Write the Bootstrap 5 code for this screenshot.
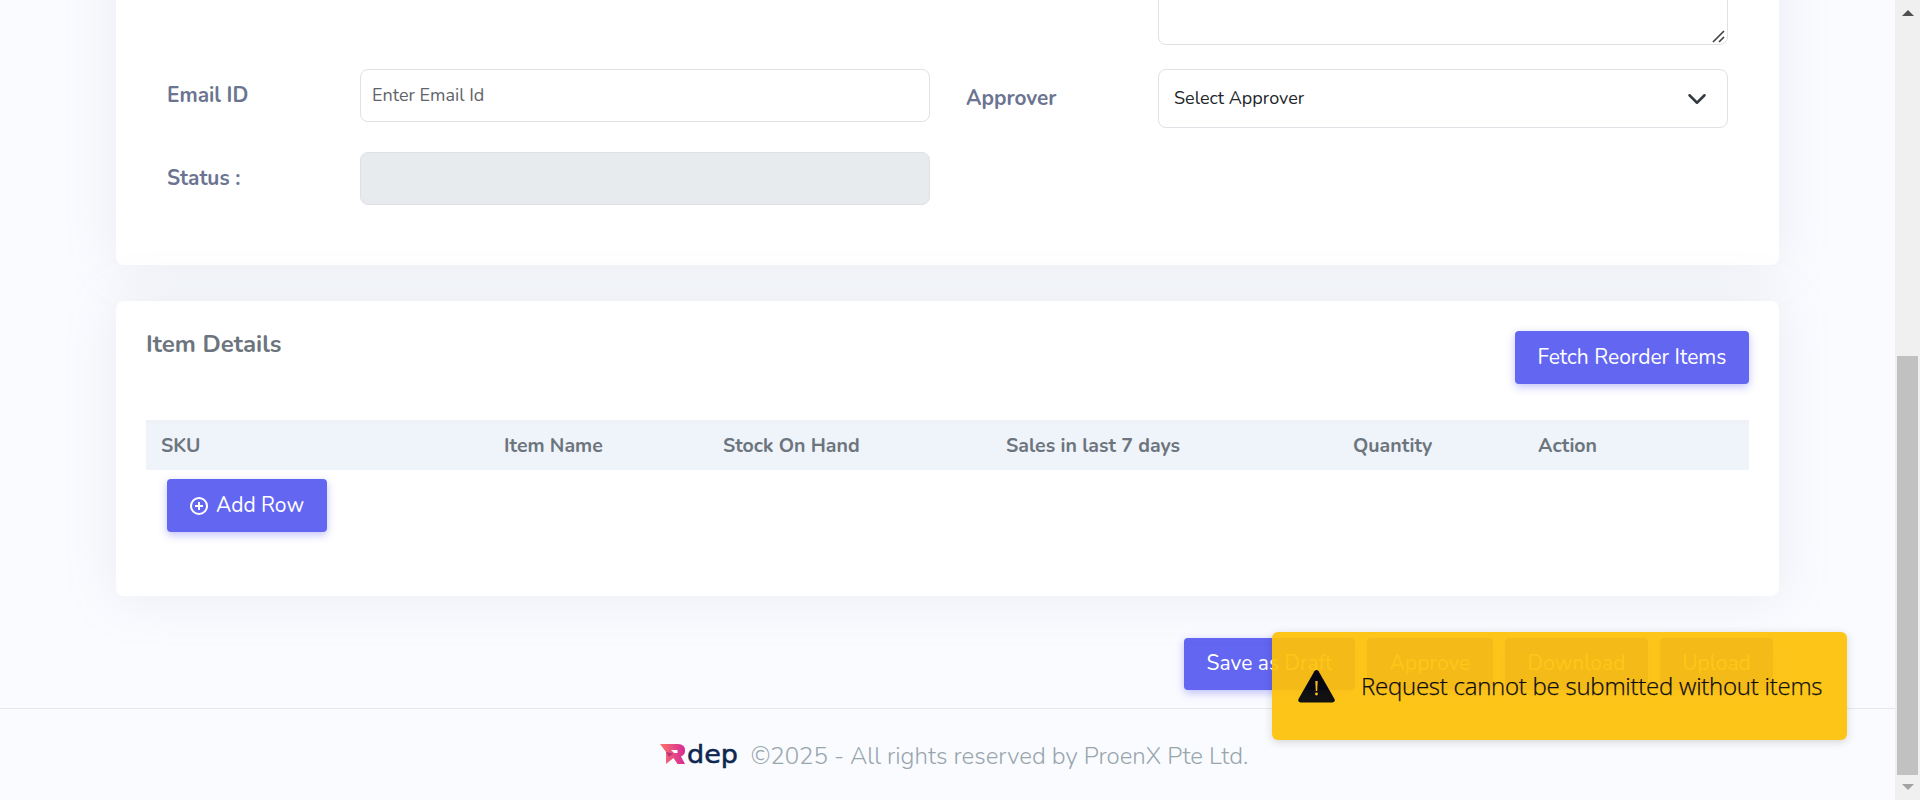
<!DOCTYPE html>
<html lang="en">
<head>
<meta charset="utf-8">
<title>Purchase Request</title>
<link rel="stylesheet" href="https://cdn.jsdelivr.net/npm/bootstrap@5.3.0/dist/css/bootstrap.min.css">
<style>
html{overflow:hidden}
body{background:#fafbff;color:#6c757d;font-family:Nunito,Lato,sans-serif;font-size:20px;height:800px;overflow:hidden}
.page-area{height:800px;overflow:hidden}
.panel{background:#fff;border:0;border-radius:8px;box-shadow:0 0 52px rgba(154,161,171,.17);margin:0 116px}
.panel-form{margin-top:-100px;height:365px;padding:20px 51px 0}
.form-col{width:570px;flex:none}
.field-label{color:#6b7490;font-weight:700;font-size:20.8px;width:193px;flex:none}
.email-label{padding-top:11px}
.approver-field{margin-left:36px}
.approver-field .field-label{width:192px}
.form-control,.form-select{border:1px solid #dee2e6;border-radius:8px;font-size:18px}
.form-control{height:53px;padding:0 12px 2px 11px}
.form-control::placeholder{color:#5f6469}
.form-control:disabled{background:#e8ebee}
textarea.form-control{height:125px;resize:none}
.grip{position:absolute;right:2px;bottom:2px}
.form-select{height:59px;padding:0 54px 0 15px;color:#212529;background-size:20px 20px;background-position:right 20px center}
.panel-items{margin-top:36px;height:295px;padding:30px}
.panel-title{font-size:24px;font-weight:700;line-height:27px}
.btn-main{background:#6366f1;color:#fff;border:0;border-radius:4px;height:53px;font-size:21px;box-shadow:0 3px 9px rgba(99,102,241,.4);padding:0;display:flex;align-items:center;justify-content:center;white-space:nowrap}
.items-head{background:#eff3fa;height:50px;border-top:3px solid #eef1f5;font-weight:700;font-size:19.5px;margin-top:36px;display:grid;grid-template-columns:343px 219px 283px 347px 185px 1fr;align-items:center;padding:0 0 1px 15px}
.actions{margin:42px 122px 0 0;gap:12px}
.actions .btn-main{height:52px}
.page-foot{border-top:1px solid #e5e7ec;margin-top:18px;height:92px;color:#98a6ad;font-size:24px;font-weight:300;gap:12px;padding:3px 0 0 13px}
.notice{position:absolute;left:1272px;top:632px;width:575px;height:108px;background:#ffc107;opacity:.925;border-radius:6px;box-shadow:0 2px 9px rgba(0,0,0,.16);color:#000;font-family:"Segoe UI","Open Sans",sans-serif;font-size:24px;font-weight:300;letter-spacing:-.25px;-webkit-text-stroke:.25px #000;white-space:nowrap;padding:0 0 0 26px;gap:26px}
.notice svg{flex:none}
.scroll-track{width:25px;background:#f0f0f0;height:800px;flex:none;padding:10px 2px}
.scroll-thumb{background:#c1c1c1;width:21px;height:419px;margin-top:340px;margin-bottom:9px}
</style>
</head>
<body class="d-flex position-relative">
<main class="page-area flex-grow-1">
  <section class="card panel panel-form">
    <div class="d-flex justify-content-end"><div class="form-col position-relative"><textarea class="form-control"></textarea><svg class="grip" width="14" height="13" fill="none" stroke="#444" stroke-width="1.7"><path d="M1 12L12 1M7 12L12 7"/></svg></div></div>
    <div class="d-flex mt-4">
      <div class="d-flex"><label class="field-label email-label">Email ID</label><div class="form-col"><input class="form-control" placeholder="Enter Email Id"></div></div>
      <div class="d-flex align-items-center approver-field"><label class="field-label">Approver</label><div class="form-col"><select class="form-select"><option>Select Approver</option></select></div></div>
    </div>
    <div class="d-flex mt-4 align-items-center"><label class="field-label">Status :</label><div class="form-col"><input class="form-control" disabled></div></div>
  </section>
  <section class="card panel panel-items">
    <div class="d-flex justify-content-between align-items-start">
      <h4 class="panel-title m-0">Item Details</h4>
      <button class="btn btn-main" style="width:234px">Fetch Reorder Items</button>
    </div>
    <div class="items-head"><div>SKU</div><div>Item Name</div><div>Stock On Hand</div><div>Sales in last 7 days</div><div>Quantity</div><div>Action</div></div>
    <button class="btn btn-main" style="width:160px;margin:9px 0 0 21px"><svg width="18" height="18" viewBox="0 0 18 18" fill="none" stroke="#fff" stroke-width="2" class="me-2"><circle cx="9" cy="9" r="8"/><path d="M9 5v8M5 9h8"/></svg>Add Row</button>
  </section>
  <div class="d-flex justify-content-end actions">
    <button class="btn btn-main" style="width:171px">Save as Draft</button>
    <button class="btn btn-main" style="width:126px">Approve</button>
    <button class="btn btn-main" style="width:143px">Download</button>
    <button class="btn btn-main" style="width:113px">Upload</button>
  </div>
  <footer class="page-foot d-flex align-items-center justify-content-center">
    <svg width="79" height="28" viewBox="0 0 79 28"><defs><linearGradient id="rg"><stop offset="0" stop-color="#fb7469"/><stop offset="1" stop-color="#d42a97"/></linearGradient></defs>
    <path fill="url(#rg)" d="M0 2H18Q25 2 25 8.500Q25 13 21 14.500L25 22H17.500L13.500 16L6 22V10Z"/><path fill="#fafbff" d="M11 8H17.500V11H14Z"/><path fill="#b8327e" d="M6 10L13 11.500L9 15Z"/>
    <text x="27" y="21" font-family="DejaVu Sans, sans-serif" font-weight="400" font-size="25" textLength="51" lengthAdjust="spacingAndGlyphs" fill="#0c2650" stroke="#0c2650" stroke-width=".5">dep</text></svg>
    <span>©2025 - All rights reserved by ProenX Pte Ltd.</span>
  </footer>
</main>
<aside class="scroll-track"><svg class="d-block mx-auto" width="12" height="6"><path d="M6 0L12 6H0Z" fill="#505050"/></svg><div class="scroll-thumb"></div><svg class="d-block mx-auto" width="12" height="6"><path d="M0 0H12L6 6Z" fill="#a3a3a3"/></svg></aside>
<div class="notice d-flex align-items-center" role="alert">
  <svg width="37" height="33" viewBox="0 0 37 33"><path d="M16.400 1.200Q18.500-1 20.600 1.200L36.500 29Q37.500 32 34.500 32.500H2.500Q-.5 32 .5 29Z"/><path d="M17.300 11h2.400l-.5 10h-1.400z" fill="#ffc107"/><circle cx="18.500" cy="24" r="1.400" fill="#ffc107"/></svg>
  <span>Request cannot be submitted without items</span>
</div>
<script src="https://cdn.jsdelivr.net/npm/bootstrap@5.3.0/dist/js/bootstrap.bundle.min.js"></script>
</body>
</html>
